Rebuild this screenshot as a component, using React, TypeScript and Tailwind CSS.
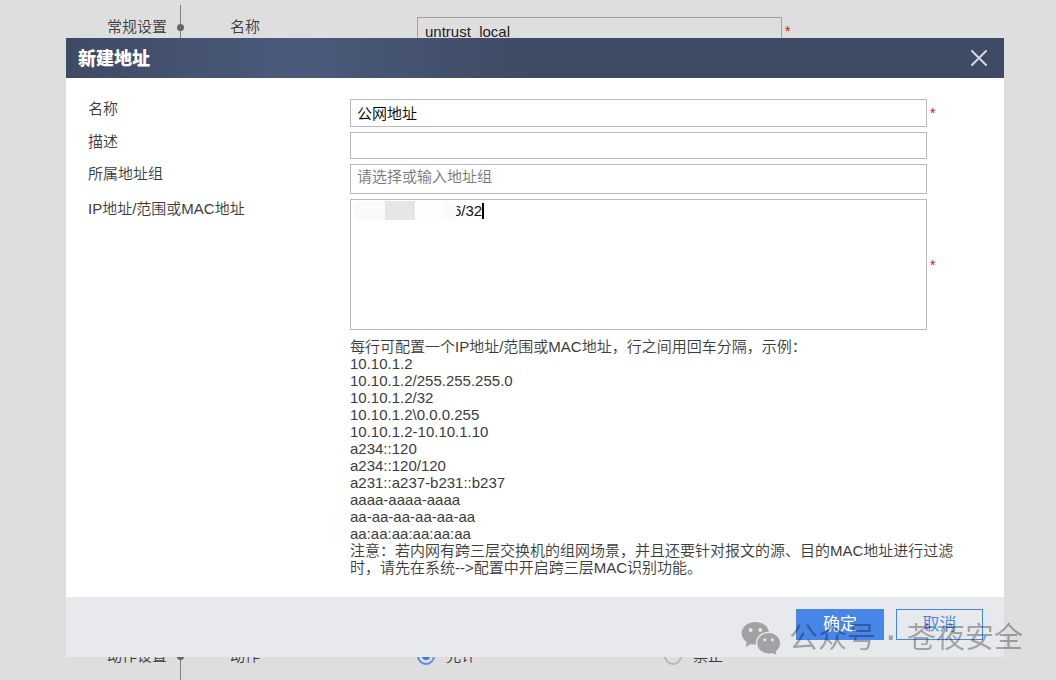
import type { ReactNode } from "react";

const examples = [
  "10.10.1.2",
  "10.10.1.2/255.255.255.0",
  "10.10.1.2/32",
  "10.10.1.2\\0.0.0.255",
  "10.10.1.2-10.10.1.10",
  "a234::120",
  "a234::120/120",
  "a231::a237-b231::b237",
  "aaaa-aaaa-aaaa",
  "aa-aa-aa-aa-aa-aa",
  "aa:aa:aa:aa:aa:aa",
];

function WeChatIcon() {
  return (
    <svg viewBox="0 0 40 34" className="mr-2 h-[34px] w-10" fill="currentColor" aria-hidden="true">
      <mask id="back-bubble" maskUnits="userSpaceOnUse" x="0" y="0" width="40" height="34">
        <rect width="40" height="34" fill="#fff" />
        <circle cx="9.7" cy="9" r="1.9" fill="#000" />
        <circle cx="19.3" cy="9" r="1.9" fill="#000" />
        <ellipse cx="27.7" cy="22.3" rx="12.8" ry="11.6" fill="#000" />
      </mask>
      <mask id="front-bubble" maskUnits="userSpaceOnUse" x="0" y="0" width="40" height="34">
        <rect width="40" height="34" fill="#fff" />
        <circle cx="23.8" cy="18.8" r="1.5" fill="#000" />
        <circle cx="31.4" cy="18.8" r="1.5" fill="#000" />
      </mask>
      <path
        mask="url(#back-bubble)"
        d="M14.3.9C6.7.9.6 5.9.6 12.2c0 3.5 1.9 6.6 5 8.7L4.9 26l5-3c1.400.4 2.900.6 4.400.6 7.600 0 13.700-5.100 13.700-11.400S21.900.9 14.300.9Z"
      />
      <path
        mask="url(#front-bubble)"
        d="M27.7 12.100c-6.300 0-11.400 4.500-11.400 10.200s5.100 10.200 11.400 10.200c1.300 0 2.600-.2 3.800-.6l4 2-.8-3.600c2.700-1.900 4.400-4.800 4.400-8 0-5.700-5.100-10.200-11.400-10.200Z"
      />
    </svg>
  );
}

function PolicySection({ title, grow, children }: { title: string; grow?: boolean; children: ReactNode }) {
  return (
    <section className={grow ? "flex grow" : "flex"}>
      <h2 className="relative w-[181px] shrink-0 border-r border-[#7f7f7f] pt-3 pr-[13px] text-right leading-5 font-[350]">
        {title}
        <span className="absolute top-[19px] -right-1 size-[7px] rounded-full bg-[#666]" />
      </h2>
      <div className="flex grow items-start pl-[49px]">{children}</div>
    </section>
  );
}

function PolicyPage() {
  return (
    <main className="flex min-h-screen flex-col pt-[5px]">
      <PolicySection title="常规设置" grow>
        <label htmlFor="policy-name" className="w-[187px] pt-3 leading-5">
          名称
        </label>
        <input
          id="policy-name"
          defaultValue="untrust_local"
          className="mt-3 h-[30px] w-[365px] border border-[#a0a0a0] px-[7px] pb-0.5 text-[#222]"
        />
        <span className="pt-4 pl-[3px] text-[14px] leading-5 text-red-600">*</span>
      </PolicySection>
      <PolicySection title="动作设置">
        <fieldset className="flex h-[46px] items-start">
          <legend className="float-left w-[187px] pt-3 leading-5">动作</legend>
          <label className="flex w-[247px] items-center gap-[11px] pt-3 leading-5">
            <input
              type="radio"
              name="action"
              defaultChecked
              className="size-[18px] appearance-none rounded-full border-2 border-[#5a8cdc] bg-[#3c7be0] bg-clip-content p-[3px]"
            />
            允许
          </label>
          <label className="flex items-center gap-[11px] pt-3 leading-5">
            <input
              type="radio"
              name="action"
              className="size-[18px] appearance-none rounded-full border-2 border-[#b4b6bd]"
            />
            禁止
          </label>
        </fieldset>
      </PolicySection>
    </main>
  );
}

function Required() {
  return <span className="w-[37px] shrink-0 self-center pl-[3px] text-[14px] leading-5 text-red-600">*</span>;
}

function Optional() {
  return <span className="w-[37px] shrink-0" />;
}

function AddressDialog() {
  return (
    <div role="dialog" aria-labelledby="dialog-title" className="bg-white">
      <header className="flex h-10 items-center justify-between bg-[linear-gradient(90deg,#3f4a64_0px,#4b5a7c_235px,#3f4a64_460px)] pr-4 pl-3">
        <h1 id="dialog-title" className="pt-0.5 text-[18px] font-black text-white">
          新建地址
        </h1>
        <button type="button" aria-label="关闭" className="p-px">
          <svg viewBox="0 0 16 16" className="size-4" fill="none" stroke="#d3d7e0" strokeWidth="2" strokeLinecap="round">
            <path d="M1 1 15 15M15 1 1 15" />
          </svg>
        </button>
      </header>

      <form className="pt-[21px] pr-10 pb-[21px] pl-[22px]">
        <div className="flex flex-col gap-[5px]">
          <div className="flex">
            <label htmlFor="name" className="w-[262px] shrink-0 leading-5">
              名称
            </label>
            <input
              id="name"
              defaultValue="公网地址"
              className="h-7 min-w-0 grow border border-[#b9babf] px-1.5 pb-0.5 text-black"
            />
            <Required />
          </div>
          <div className="flex">
            <label htmlFor="description" className="w-[262px] shrink-0 leading-5">
              描述
            </label>
            <input id="description" className="h-[27px] min-w-0 grow border border-[#b9babf] px-1.5 pb-0.5" />
            <Optional />
          </div>
          <div className="flex">
            <label htmlFor="group" className="w-[262px] shrink-0 leading-5">
              所属地址组
            </label>
            <input
              id="group"
              placeholder="请选择或输入地址组"
              className="h-[30px] min-w-0 grow border border-[#b9babf] px-1.5 pb-1.5 placeholder:text-[#777]"
            />
            <Optional />
          </div>
          <div className="flex">
            <label htmlFor="addresses" className="w-[262px] shrink-0 leading-5">
              IP地址/范围或MAC地址
            </label>
            <div className="relative flex grow">
              <textarea
                id="addresses"
                defaultValue="6/32"
                className="h-[131px] min-w-0 grow resize-none border border-[#b9babf] py-0.5 pr-[7px] pl-[102px] leading-[17px] text-[#111]"
              />
              <span className="absolute top-0.5 left-1 flex h-[19px] w-[103px] overflow-hidden rounded-lg bg-[#fafafa]">
                <span className="ml-[31px] w-[30px] bg-[#e6e6e6]" />
                <span className="w-[30px] bg-[#fdfdfd]" />
              </span>
              <span className="absolute top-1 left-[132px] h-4 w-0.5 bg-black" />
            </div>
            <Required />
          </div>
        </div>
        <div className="mt-2 ml-[262px] leading-[17px]">
          <p>每行可配置一个IP地址/范围或MAC地址，行之间用回车分隔，示例：</p>
          {examples.map((line) => (
            <p key={line}>{line}</p>
          ))}
          <p>
            注意：若内网有跨三层交换机的组网场景，并且还要针对报文的源、目的MAC地址进行过滤时，请先在系统--&gt;配置中开启跨三层MAC识别功能。
          </p>
        </div>
      </form>

      <footer className="flex h-[60px] justify-end gap-3 bg-[#e8e9ed] pt-3 pr-[21px] text-[17px]">
        <button type="button" className="h-[31px] w-[88px] bg-[#4686e8] font-normal text-white">
          确定
        </button>
        <button type="button" className="h-[31px] w-[87px] border border-[#4686e8] text-[#4686e8]">
          取消
        </button>
      </footer>
    </div>
  );
}

export default function App() {
  return (
    <div className="relative min-h-screen overflow-hidden bg-[#dedede] font-['Liberation_Sans','Noto_Sans_CJK_SC',sans-serif] text-[15px] font-[350] text-[#3c3c3c]">
      <PolicyPage />
      <div className="absolute inset-x-0 top-0 pt-[38px] pr-[52px] pl-[66px]">
        <AddressDialog />
      </div>
      <div className="pointer-events-none absolute right-[33px] bottom-[22px] flex items-center text-[29px] leading-10 font-normal text-black opacity-30">
        <WeChatIcon />
        <span>公众号</span>
        <span className="w-[31px] text-center font-bold">·</span>
        <span>苍夜安全</span>
      </div>
    </div>
  );
}
